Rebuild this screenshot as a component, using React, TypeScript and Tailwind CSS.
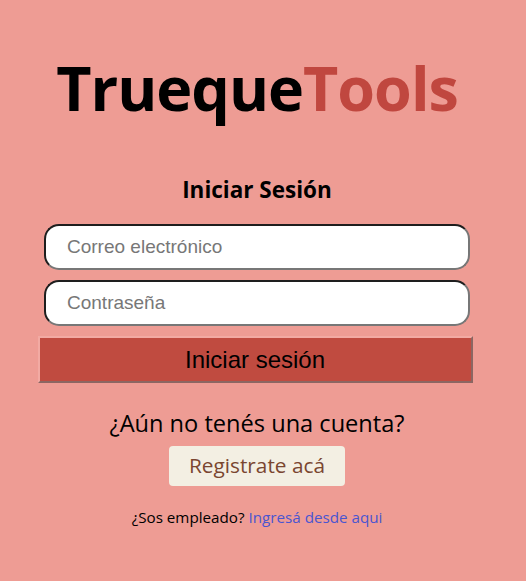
export default function App() {
  return (
    <div className="w-[526px] h-[581px] bg-[#ee9c94] overflow-hidden">
      <div className="w-[514px] flex flex-col items-center">
        {/* logo */}
        <h1 className="mt-[46px] text-[61px] leading-[84px] font-bold font-['Open_Sans',sans-serif] tracking-[-1px]">
          <span className="text-black">Trueque</span>
          <span className="text-[#c0473f]">Tools</span>
        </h1>

        <h2 className="mt-[45px] text-[22.5px] leading-[30px] font-bold text-black font-['Open_Sans',sans-serif]">
          Iniciar Sesión
        </h2>

        <form className="mt-[19px] flex flex-col items-center w-full">
          <input
            type="email"
            placeholder="Correo electrónico"
            className="w-[426px] h-[46px] rounded-[15px] bg-white border-2 border-t-[#1e1e1e] border-l-[#1e1e1e] border-r-[#777] border-b-[#777] px-[21px] text-[19px] font-['Liberation_Sans',Arial,sans-serif] placeholder:text-[#777] outline-none"
          />
          <input
            type="password"
            placeholder="Contraseña"
            className="mt-[10px] w-[426px] h-[46px] rounded-[15px] bg-white border-2 border-t-[#1e1e1e] border-l-[#1e1e1e] border-r-[#777] border-b-[#777] px-[21px] text-[19px] font-['Liberation_Sans',Arial,sans-serif] placeholder:text-[#777] outline-none"
          />
          <button
            type="button"
            className="mt-[10px] mr-[4px] w-[435px] h-[47px] bg-[#c04b40] border-2 border-t-[#f2aaa3] border-l-[#f2aaa3] border-r-[#8c6662] border-b-[#8c6662] text-[24px] text-black font-['Liberation_Sans',Arial,sans-serif]"
          >
            Iniciar sesión
          </button>
        </form>

        <p className="mt-[25px] text-[23.6px] leading-[30px] text-black font-['Open_Sans',sans-serif]">
          ¿Aún no tenés una cuenta?
        </p>
        <button
          type="button"
          className="mt-[8px] w-[176px] h-[40px] rounded-[4px] bg-[#f3efe3] text-[20.8px] text-[#7a4630] font-['Open_Sans',sans-serif]"
        >
          Registrate acá
        </button>

        <p className="mt-[21px] text-[15.2px] leading-[20px] text-black font-['Open_Sans',sans-serif]">
          ¿Sos empleado? <a href="#" className="text-[#4a55d0]">Ingresá desde aqui</a>
        </p>
      </div>
    </div>
  );
}
